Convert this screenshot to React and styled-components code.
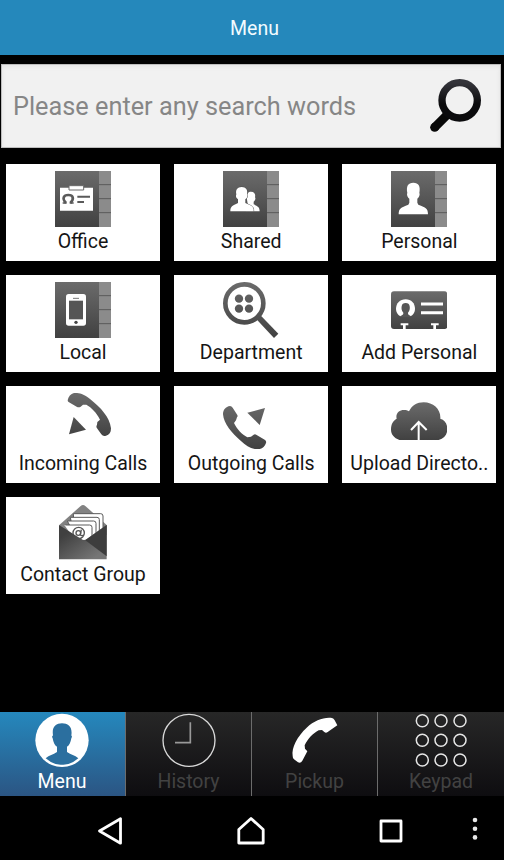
import React from "react";
import styled, { createGlobalStyle, css } from "styled-components";

const GlobalStyle = createGlobalStyle`
  html, body { margin: 0; background: #fff; }
  * { box-sizing: border-box; }
`;

const Screen = styled.div`
  width: 504px;
  height: 860px;
  display: flex;
  flex-direction: column;
  background: #000;
  font-family: Roboto, sans-serif;
  overflow: hidden;
`;

const Header = styled.header`
  height: 55px;
  flex: none;
  padding: 2px 0 0 5px;
  display: flex;
  align-items: center;
  justify-content: center;
  background: #2588bb;
  color: #f2fbff;
  font-size: 19.5px;
`;

const SearchBar = styled.label`
  flex: none;
  height: 84px;
  margin: 9px 3px 0 1px;
  padding: 0 18px 0 11px;
  display: flex;
  align-items: center;
  justify-content: space-between;
  background: #f1f1f1;
  border: 1px solid #bdbdbd;
  box-shadow: inset 0 2px 4px #e4e4e4;
`;

const SearchInput = styled.input`
  flex: 1;
  min-width: 0;
  padding: 1px 0 0;
  border: 0;
  outline: 0;
  background: transparent;
  font: 25.3px Roboto, sans-serif;
  &::placeholder { color: #868686; opacity: 1; }
`;

const SearchIcon = styled.svg`
  width: 52px;
  height: 54px;
  flex: none;
`;

const TileGrid = styled.main`
  flex: 1;
  padding: 15.5px 0 0 6px;
  display: grid;
  grid-template-columns: repeat(3, 154px);
  grid-auto-rows: 97px;
  gap: 14px 14.2px;
  align-content: start;
`;

const Tile = styled.button`
  padding: 7px 0 0;
  border: 0;
  display: flex;
  flex-direction: column;
  align-items: center;
  background: #fff;
  color: #151515;
  font: 19.5px/30px Roboto, sans-serif;
  white-space: nowrap;
`;

const TileIcon = styled.svg`
  width: 56px;
  height: 56px;
  flex: none;
  display: block;
`;

const TabBar = styled.nav`
  flex: none;
  height: 84px;
  display: grid;
  grid-template-columns: repeat(4, 1fr);
`;

const Tab = styled.button`
  padding: 0;
  border: 0;
  border-right: 1.5px solid #6c6c6c;
  display: flex;
  flex-direction: column;
  align-items: center;
  background: linear-gradient(#272727, #0e0d10);
  color: #424242;
  font: 19.5px/28px Roboto, sans-serif;
  &:last-child { border-right: 0; }
  ${(p) =>
    p.$active &&
    css`
      padding-right: 1px;
      background: linear-gradient(#2588bd, #2b5583);
      color: #fff;
    `}
`;

const TabIcon = styled.svg`
  width: 56px;
  height: 56px;
  flex: none;
`;

const SystemBar = styled.footer`
  flex: none;
  height: 64px;
  padding: 6px 0 0 40px;
  display: grid;
  grid-template-columns: 140px 141px 140px 27px;
  align-items: center;
  justify-items: center;
`;

const SystemIcon = styled.svg`
  width: 28px;
  height: 28px;
  fill: none;
  stroke: #fff;
  stroke-width: 2.8;
  stroke-linejoin: round;
`;

const Shade = ({ id, y1 = 47, y2 = 215 }) => (
  <defs>
    <linearGradient id={id} gradientUnits="userSpaceOnUse" x1="0" y1={y1} x2="0" y2={y2}>
      <stop stopColor="#6b6b6b" />
      <stop offset="1" stopColor="#414141" />
    </linearGradient>
  </defs>
);

const Book = ({ id, children }) => (
  <TileIcon viewBox="165 47 168 168">
    <Shade id={id} />
    <path d="M165 47h168v168H165z" fill="#8b8b8b" />
    <path d="M165 47h132v168H165z" fill={`url(#${id})`} />
    <path d="M297 88h36M297 130h36M297 172h36" stroke="#5a5a5a" strokeWidth="3" />
    {children}
  </TileIcon>
);

const OfficeIcon = () => (
  <Book id="office">
    <path d="M180 97h99v69h-99z" fill="#fff" />
    <path d="M207 91h44v13h-44z" fill="#fff" stroke="#6a6a6a" strokeWidth="3" />
    <path d="M198 143c-13-14-7-24 7-24s19 11 6 24" fill="none" stroke="#5a5a5a" strokeWidth="8" />
    <path d="M188 143h12M209 143h12" stroke="#5a5a5a" strokeWidth="5" />
    <path d="M232 124h38M232 140h20" stroke="#5a5a5a" strokeWidth="6" />
  </Book>
);

const SharedIcon = () => (
  <Book id="shared">
    <path d="M234 168v-8c10-6 9-9 5-15l-3-18c0-13 5-18 13-18 11 0 14 8 12 17 3 4 0 10-4 13v8c12 6 18 8 18 21z" fill="#fff" />
    <path d="M187 168c0-16 6-16 23-25v-11c-5-3-8-9-5-15-3-13 3-22 16-22s19 9 16 22c3 6 0 12-5 15v11c19 9 25 9 25 25z" fill="#fff" stroke="#505050" strokeWidth="3" paintOrder="stroke" />
  </Book>
);

const PersonalIcon = () => (
  <Book id="personal">
    <path d="M188 177c0-18 6-20 29-29l3-6v-12c-4-2-9-12-6-17-4-21 2-31 18-31s22 10 18 31c3 5-2 15-6 17v12l3 6c23 9 29 11 29 29z" fill="#fff" />
  </Book>
);

const LocalIcon = () => (
  <Book id="local">
    <rect x="198" y="83" width="60" height="95" rx="8" fill="#fff" />
    <path d="M207 103h42v56h-42z" fill="#555" />
    <path d="M219 96h18" stroke="#777" strokeWidth="3" />
    <circle cx="228" cy="168" r="5" fill="#444" />
  </Book>
);

const DepartmentIcon = () => (
  <TileIcon viewBox="165 47 168 168">
    <Shade id="department" />
    <circle cx="229" cy="111" r="57" fill="none" stroke="url(#department)" strokeWidth="14" />
    <path d="M264 157l12-12 55 57-13 13z" fill="url(#department)" />
    <g fill="url(#department)">
      <circle cx="213" cy="97" r="12.5" />
      <circle cx="243" cy="97" r="12.5" />
      <circle cx="213" cy="127" r="12.5" />
      <circle cx="243" cy="127" r="12.5" />
    </g>
  </TileIcon>
);

const AddPersonalIcon = () => (
  <TileIcon viewBox="165 47 168 168">
    <Shade id="add" y1={75} y2={188} />
    <rect x="165" y="75" width="169" height="113" rx="9" fill="url(#add)" />
    <path d="M193 150c-8-5-13-13-13-22 0-17 12-29 29-29s28 12 28 29c0 9-5 17-13 22z" fill="#fff" />
    <path d="M192 152c3-7 11-5 10-13-6-7-6-13-5-19 1-7 5-10 12-10s11 3 12 10c1 6 1 12-5 19-1 8 7 6 10 13z" fill="#565656" />
    <path d="M255 113h66M255 139h66" stroke="#fff" strokeWidth="9" />
    <path d="M194 174h23M285 174h23" stroke="#fff" strokeWidth="6" />
    <path d="M205 174v15M296 174v15" stroke="#fff" strokeWidth="8" />
  </TileIcon>
);

const IncomingIcon = () => (
  <TileIcon viewBox="165 47 168 168">
    <Shade id="incoming" y2={180} />
    <path d="M203 69C205 57 212 50 222 47C239 46 252 50 271 66C302 91 329 119 333 153C333 166 328 173 318 175Q309 178 304 171L290 151Q288 147 291 142L292 134L300 127C289 105 275 91 259 82L249 82L242 88Q236 92 230 88L207 75Q203 73 203 69Z" fill="url(#incoming)" />
    <path d="M221 119L258 157L207 171Z" fill="url(#incoming)" />
  </TileIcon>
);

const OutgoingIcon = () => (
  <TileIcon viewBox="669 47 168 168">
    <Shade id="outgoing" y1={75} />
    <path d="M690 86Q695 86 698 91L712 113Q714 117 711 120L708 129L702 137C711 156 726 171 742 180L753 178L761 172Q765 169 770 173L794 187Q800 191 798 197C794 209 785 215 774 216C756 216 739 206 722 190C696 168 671 139 669 111C669 97 677 88 690 86Z" fill="url(#outgoing)" />
    <path d="M795 92L742 106L779 143Z" fill="url(#outgoing)" />
  </TileIcon>
);

const UploadIcon = () => (
  <TileIcon viewBox="165 47 168 168">
    <Shade id="upload" y1={75} y2={188} />
    <path d="M190 188C174 182 165 172 165 156C165 139 172 130 182 124C178 109 189 98 204 98C210 98 215 99 219 102C228 84 243 75 263 75C292 75 315 96 313 124C327 128 334 140 334 155C334 172 325 183 308 188Z" fill="url(#upload)" />
    <path d="M248 189V135M225 158L248 134L272 158" fill="none" stroke="#fff" strokeWidth="6" />
  </TileIcon>
);

const ContactGroupIcon = () => (
  <TileIcon viewBox="165 47 168 168">
    <defs>
      <linearGradient id="envelope" x1="0" y1="0" x2="1" y2="1">
        <stop offset="0.2" stopColor="#404040" />
        <stop offset="0.85" stopColor="#757575" />
      </linearGradient>
    </defs>
    <path d="M178 110L242 53Q249 47 256 53L320 110V140H178Z" fill="#828282" />
    <g fill="#fff" stroke="#5b5b5b" strokeWidth="3">
      <path d="M220 76h82q7 0 7 7v62l-60 20-25-20z" />
      <path d="M211 87h80q7 0 7 7v61l-50 10-25-15z" />
      <path d="M202 98h79q7 0 7 7v60h-50z" />
      <path d="M193 110h76q7 0 7 7v54h-40z" stroke="none" />
      <path d="M196 110h73q7 0 7 7v34" fill="none" />
    </g>
    <circle cx="236" cy="134" r="17" fill="none" stroke="#555" strokeWidth="4" />
    <circle cx="235" cy="134" r="7" fill="none" stroke="#555" strokeWidth="4" />
    <path d="M244 124l-3 15q3 6 10 0" fill="none" stroke="#555" strokeWidth="4" />
    <path d="M177 110L244 152Q252 158 260 152L320 110V213H177Z" fill="url(#envelope)" />
    <path d="M320 110L256 156L320 204Z" fill="#3d3d3d" />
  </TileIcon>
);

const MenuTabIcon = () => (
  <TabIcon viewBox="101 21 168 168">
    <circle cx="185" cy="106" r="80" fill="#fff" />
    <path d="M136 160C147 150 158 149 170 141V125C163 122 159 112 157 100L155 95L158 91C154 66 166 55 185 55S217 66 213 91L215 95L213 100C211 112 207 122 200 125V141C212 149 223 150 234 160Q210 181 185 179Q160 181 136 160Z" fill="#2b6f9f" />
  </TabIcon>
);

const HistoryIcon = () => (
  <TabIcon viewBox="481 21 168 168" fill="none">
    <circle cx="565" cy="106" r="78" stroke="#d8d8d8" strokeWidth="4" />
    <path d="M569 52V113H523" stroke="#999" strokeWidth="5" />
  </TabIcon>
);

const PickupIcon = () => (
  <TabIcon viewBox="104 21 168 168">
    <path d="M121 153C117 128 135 94 163 68C187 46 214 36 239 39Q244 40 247 46L255 61L226 81Q221 85 216 81L209 75L199 76C182 85 167 101 157 121L158 131L165 139L150 167Q145 176 137 172L125 163Q121 160 121 153Z" fill="#fff" />
  </TabIcon>
);

const KeypadIcon = () => (
  <TabIcon viewBox="484 21 168 168" fill="none" stroke="#e6e6e6" strokeWidth="4.5">
    {[47, 106, 165].map((y) =>
      [512, 568, 625].map((x) => <circle key={`${x}-${y}`} cx={x} cy={y} r="18" />)
    )}
  </TabIcon>
);

const tiles = [
  ["Office", OfficeIcon],
  ["Shared", SharedIcon],
  ["Personal", PersonalIcon],
  ["Local", LocalIcon],
  ["Department", DepartmentIcon],
  ["Add Personal", AddPersonalIcon],
  ["Incoming Calls", IncomingIcon],
  ["Outgoing Calls", OutgoingIcon],
  ["Upload Directo..", UploadIcon],
  ["Contact Group", ContactGroupIcon],
];

const tabs = [
  ["Menu", MenuTabIcon],
  ["History", HistoryIcon],
  ["Pickup", PickupIcon],
  ["Keypad", KeypadIcon],
];

export default function App() {
  return (
    <Screen>
      <GlobalStyle />
      <Header>Menu</Header>
      <SearchBar>
        <SearchInput placeholder="Please enter any search words" />
        <SearchIcon viewBox="1290 237 156 162">
          <defs>
            <linearGradient id="lens" x1="0" y1="0" x2="0" y2="1">
              <stop stopColor="#34343a" />
              <stop offset="0.6" stopColor="#0b0b0d" />
            </linearGradient>
          </defs>
          <path d="M1304 382L1345 341" stroke="#080808" strokeWidth="26" />
          <circle cx="1304" cy="382" r="13.5" fill="#080808" />
          <circle cx="1379" cy="301" r="53" fill="none" stroke="url(#lens)" strokeWidth="22" />
        </SearchIcon>
      </SearchBar>
      <TileGrid>
        {tiles.map(([label, Icon]) => (
          <Tile key={label}>
            <Icon />
            {label}
          </Tile>
        ))}
      </TileGrid>
      <TabBar>
        {tabs.map(([label, Icon], i) => (
          <Tab key={label} $active={i === 0}>
            <Icon />
            {label}
          </Tab>
        ))}
      </TabBar>
      <SystemBar>
        <SystemIcon viewBox="0 0 28 28">
          <path d="M3.5 14L24.5 1.8V26.2Z" />
        </SystemIcon>
        <SystemIcon viewBox="0 0 28 28">
          <path d="M1.8 12.5L14 1.5L26.2 12.5V26H1.8Z" />
        </SystemIcon>
        <SystemIcon viewBox="0 0 28 28">
          <path d="M4 4H24V24H4Z" />
        </SystemIcon>
        <SystemIcon viewBox="0 0 28 28">
          <g fill="#e8e8e8" stroke="none">
            <circle cx="14" cy="3" r="2.3" />
            <circle cx="14" cy="11.7" r="2.3" />
            <circle cx="14" cy="20.4" r="2.3" />
          </g>
        </SystemIcon>
      </SystemBar>
    </Screen>
  );
}
